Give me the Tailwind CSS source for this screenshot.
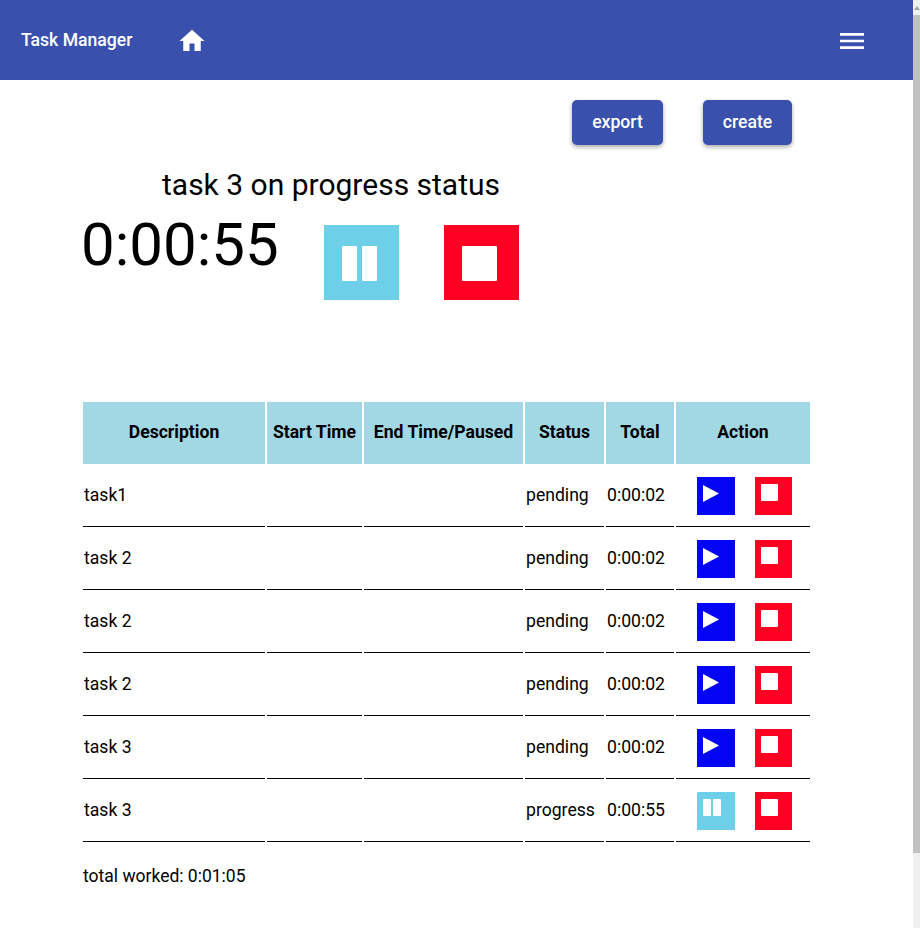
<!DOCTYPE html>
<html lang="en">
<head>
    <meta charset="UTF-8">
    <meta name="viewport" content="width=device-width, initial-scale=1.0">
    <title>Task Manager</title>
    <script src="https://cdn.jsdelivr.net/npm/@tailwindcss/browser@4"></script>
</head>
<body class="relative h-[928px] overflow-hidden bg-white text-black text-[17.6px] font-['Roboto',sans-serif]">
    <div class="w-[913px]">
        <!-- Navbar -->
        <nav class="flex items-center h-20 bg-[#3951ad] text-white">
            <span class="ml-[21px] text-[17.6px] font-medium">Task Manager</span>
            <svg class="ml-[45px] mt-0.5 w-[30px] h-[30px]" viewBox="0 0 24 24" fill="currentColor"><path d="M10 20v-6h4v6h5v-8h3L12 3 2 12h3v8z"/></svg>
            <svg class="ml-auto mr-[45px] mt-0.5 w-8 h-8" viewBox="0 0 24 24" fill="currentColor"><path d="M3 18h18v-2H3v2zm0-5h18v-2H3v2zm0-5h18V6H3v2z"/></svg>
        </nav>

        <!-- Export / create -->
        <div class="flex justify-end gap-10 pt-5 pr-[121px]">
            <button class="w-[91px] h-[45px] rounded-[5px] bg-[#3951ad] text-white font-medium shadow-[0_2px_4px_rgba(0,0,0,0.35)]">export</button>
            <button class="w-[89px] h-[45px] rounded-[5px] bg-[#3951ad] text-white font-medium shadow-[0_2px_4px_rgba(0,0,0,0.35)]">create</button>
        </div>

        <!-- Current task -->
        <h2 class="mt-5 pl-[162px] text-[30px] leading-10">task 3 on progress status</h2>
        <div class="flex items-start h-[195px] pl-[81px]">
            <div class="text-[60px] leading-[70px] w-[243px] mt-[5px]">0:00:55</div>
            <button class="flex items-start gap-[5px] w-[75px] h-[75px] mt-5 pl-[18px] pt-[21px] bg-[#6dcfe8]">
                <span class="w-[15px] h-[35px] rounded-[1px] bg-white"></span>
                <span class="w-[15px] h-[35px] rounded-[1px] bg-white"></span>
            </button>
            <button class="flex items-start w-[75px] h-[75px] mt-5 ml-[45px] pl-[18px] pt-[21px] bg-[#ff0022]">
                <span class="w-[35px] h-[35px] rounded-[1px] bg-white"></span>
            </button>
        </div>

        <!-- Tasks -->
        <table class="ml-[81px] border-separate border-spacing-[2px] table-fixed w-[731px]">
            <thead>
                <tr class="bg-[#a2d7e4] h-[62px] font-bold">
                    <th class="w-[182px] pb-0.5">Description</th>
                    <th class="w-[95px] pb-0.5">Start Time</th>
                    <th class="w-[159px] pb-0.5">End Time/Paused</th>
                    <th class="w-[79px] pb-0.5">Status</th>
                    <th class="w-[68px] pb-0.5">Total</th>
                    <th class="w-[134px] pb-0.5">Action</th>
                </tr>
            </thead>
            <tbody>
                <tr class="h-[61px]">
                    <td class="border-b border-black pl-px pb-0.5">task1</td>
                    <td class="border-b border-black"></td>
                    <td class="border-b border-black"></td>
                    <td class="border-b border-black pl-px pb-0.5">pending</td>
                    <td class="border-b border-black pl-px pb-0.5">0:00:02</td>
                    <td class="border-b border-black pl-[21px]">
                        <div class="flex gap-5">
                            <button class="flex items-start w-[38px] h-[38px] pl-1.5 pt-2 bg-[#0505f5]"><svg class="w-4 h-[17px] block" viewBox="0 0 16 17" fill="white"><path d="M0 0l16 8.5L0 17z"/></svg></button>
                            <button class="flex items-start w-[37px] h-[38px] pl-1.5 pt-[7px] bg-[#ff0022]"><span class="w-[17px] h-[17px] rounded-[1px] bg-white"></span></button>
                        </div>
                    </td>
                </tr>
                <tr class="h-[61px]">
                    <td class="border-b border-black pl-px pb-0.5">task 2</td>
                    <td class="border-b border-black"></td>
                    <td class="border-b border-black"></td>
                    <td class="border-b border-black pl-px pb-0.5">pending</td>
                    <td class="border-b border-black pl-px pb-0.5">0:00:02</td>
                    <td class="border-b border-black pl-[21px]">
                        <div class="flex gap-5">
                            <button class="flex items-start w-[38px] h-[38px] pl-1.5 pt-2 bg-[#0505f5]"><svg class="w-4 h-[17px] block" viewBox="0 0 16 17" fill="white"><path d="M0 0l16 8.5L0 17z"/></svg></button>
                            <button class="flex items-start w-[37px] h-[38px] pl-1.5 pt-[7px] bg-[#ff0022]"><span class="w-[17px] h-[17px] rounded-[1px] bg-white"></span></button>
                        </div>
                    </td>
                </tr>
                <tr class="h-[61px]">
                    <td class="border-b border-black pl-px pb-0.5">task 2</td>
                    <td class="border-b border-black"></td>
                    <td class="border-b border-black"></td>
                    <td class="border-b border-black pl-px pb-0.5">pending</td>
                    <td class="border-b border-black pl-px pb-0.5">0:00:02</td>
                    <td class="border-b border-black pl-[21px]">
                        <div class="flex gap-5">
                            <button class="flex items-start w-[38px] h-[38px] pl-1.5 pt-2 bg-[#0505f5]"><svg class="w-4 h-[17px] block" viewBox="0 0 16 17" fill="white"><path d="M0 0l16 8.5L0 17z"/></svg></button>
                            <button class="flex items-start w-[37px] h-[38px] pl-1.5 pt-[7px] bg-[#ff0022]"><span class="w-[17px] h-[17px] rounded-[1px] bg-white"></span></button>
                        </div>
                    </td>
                </tr>
                <tr class="h-[61px]">
                    <td class="border-b border-black pl-px pb-0.5">task 2</td>
                    <td class="border-b border-black"></td>
                    <td class="border-b border-black"></td>
                    <td class="border-b border-black pl-px pb-0.5">pending</td>
                    <td class="border-b border-black pl-px pb-0.5">0:00:02</td>
                    <td class="border-b border-black pl-[21px]">
                        <div class="flex gap-5">
                            <button class="flex items-start w-[38px] h-[38px] pl-1.5 pt-2 bg-[#0505f5]"><svg class="w-4 h-[17px] block" viewBox="0 0 16 17" fill="white"><path d="M0 0l16 8.5L0 17z"/></svg></button>
                            <button class="flex items-start w-[37px] h-[38px] pl-1.5 pt-[7px] bg-[#ff0022]"><span class="w-[17px] h-[17px] rounded-[1px] bg-white"></span></button>
                        </div>
                    </td>
                </tr>
                <tr class="h-[61px]">
                    <td class="border-b border-black pl-px pb-0.5">task 3</td>
                    <td class="border-b border-black"></td>
                    <td class="border-b border-black"></td>
                    <td class="border-b border-black pl-px pb-0.5">pending</td>
                    <td class="border-b border-black pl-px pb-0.5">0:00:02</td>
                    <td class="border-b border-black pl-[21px]">
                        <div class="flex gap-5">
                            <button class="flex items-start w-[38px] h-[38px] pl-1.5 pt-2 bg-[#0505f5]"><svg class="w-4 h-[17px] block" viewBox="0 0 16 17" fill="white"><path d="M0 0l16 8.5L0 17z"/></svg></button>
                            <button class="flex items-start w-[37px] h-[38px] pl-1.5 pt-[7px] bg-[#ff0022]"><span class="w-[17px] h-[17px] rounded-[1px] bg-white"></span></button>
                        </div>
                    </td>
                </tr>
                <tr class="h-[61px]">
                    <td class="border-b border-black pl-px pb-0.5">task 3</td>
                    <td class="border-b border-black"></td>
                    <td class="border-b border-black"></td>
                    <td class="border-b border-black pl-px pb-0.5">progress</td>
                    <td class="border-b border-black pl-px pb-0.5">0:00:55</td>
                    <td class="border-b border-black pl-[21px]">
                        <div class="flex gap-5">
                            <button class="flex items-start gap-[2px] w-[38px] h-[38px] pl-1.5 pt-[7px] bg-[#6dcfe8]"><span class="w-2 h-[17px] rounded-[1px] bg-white"></span><span class="w-2 h-[17px] rounded-[1px] bg-white"></span></button>
                            <button class="flex items-start w-[37px] h-[38px] pl-1.5 pt-[7px] bg-[#ff0022]"><span class="w-[17px] h-[17px] rounded-[1px] bg-white"></span></button>
                        </div>
                    </td>
                </tr>
            </tbody>
        </table>

        <p class="mt-[19px] ml-[83px] text-[17.5px]">total worked: 0:01:05</p>
    </div>

    <!-- Scrollbar -->
    <div class="absolute top-0 right-0 w-[7px] h-[928px] bg-[#f0f0f0]">
        <div class="h-[15px] flex items-center justify-center">
            <span class="border-x-[3px] border-x-transparent border-b-[4px] border-b-[#a3a3a3]"></span>
        </div>
        <div class="h-[838px] bg-[#c1c1c1]"></div>
    </div>
</body>
</html>
